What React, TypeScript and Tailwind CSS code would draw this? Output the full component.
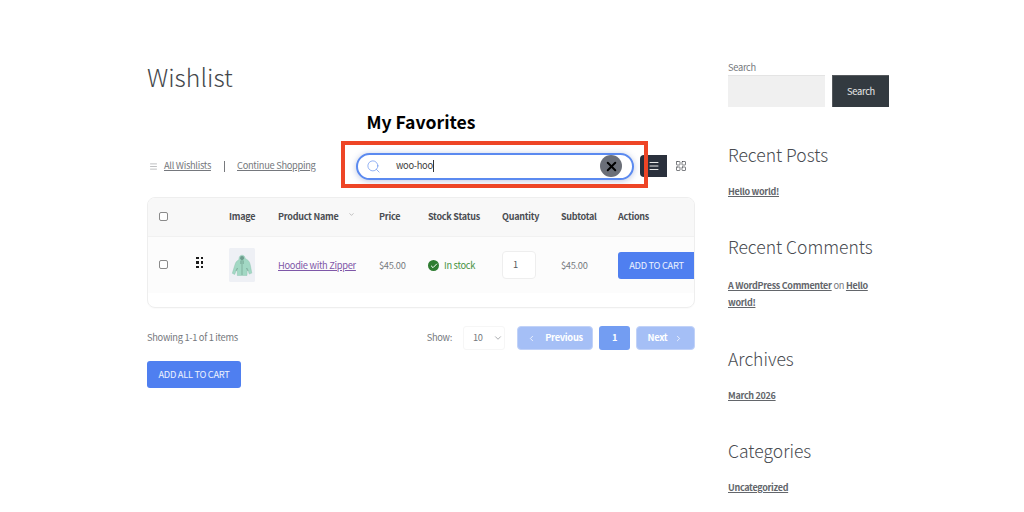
import React from "react";
import { Search, X, ChevronDown, ChevronLeft, ChevronRight, Menu, LayoutGrid, Check } from "lucide-react";

const font = { fontFamily: '"Noto Sans CJK SC", "Noto Sans", sans-serif' };

function Hoodie() {
  return (
    <svg viewBox="0 0 26 34" className="w-[26px] h-[34px]">
      <rect width="26" height="34" rx="1.5" fill="#eef0f5" />
      <path d="M10 10.500c.3-2.200 1.500-3.300 3-3.300 1.700 0 2.900 1.100 3.200 3.300l2.300 1.400c1.600 1 2.400 3 2.900 5.600l1.400 7.600-2.600 1-1.900-6-.3 7.400H8.300l-.2-7-2.400 6-2.400-1.200 2.400-7.800c.7-2.500 1.600-4.200 3-5l1.300-1z" fill="#a2d8c4" stroke="#86bda9" strokeWidth=".4" />
      <path d="M11 10.500c.6 1.200 1.300 1.700 2 1.700s1.500-.5 2.100-1.700l-.5-2c-1-.7-2.100-.7-3.100 0z" fill="#6d9c8d" />
      <path d="M13 12v15M11.800 12.500v3.500M14.300 12.500v3.500M8.500 20l-1.500 3M17.500 20l1.500 3" stroke="#5d8a7b" strokeWidth=".5" fill="none" />
    </svg>
  );
}

function Check0({ className = "" }: { className?: string }) {
  return <span className={"block w-[9px] h-[9px] rounded-[2px] border border-[#8a8a8a] bg-white " + className} />;
}

function SideHeading({ children }: { children: React.ReactNode }) {
  return <h2 className="text-[17.500px] leading-[26px] tracking-normal font-light text-[#484b50] whitespace-nowrap">{children}</h2>;
}

function SideLink({ children }: { children: React.ReactNode }) {
  return <a className="font-semibold underline text-[9px] tracking-[-0.3px] text-[#63666b]">{children}</a>;
}

function Cell({ children, className = "" }: { children: React.ReactNode; className?: string }) {
  return <div className={"flex items-center " + className}>{children}</div>;
}

export default function App() {
  return (
    <div style={font} className="relative w-[1024px] h-[512px] overflow-hidden bg-white text-[9.300px] tracking-[-0.3px] text-[#75787d]">
      <div className="flex w-[742px] ml-[147px] gap-[33px]">
        <main className="w-[548px] shrink-0">
          <h1 className="mt-[58px] h-[36px] text-[24.800px] leading-[36px] tracking-normal font-light text-[#44474b]">Wishlist</h1>
          <div className="mt-[15px] h-[26px] text-[17.600px] leading-[26px] tracking-normal font-bold text-black text-center">
            My Favorites
          </div>

          <div className="relative mt-[16px] h-[30px] flex items-center">
            <Menu size={9} className="text-[#8d8f93] ml-[2px]" strokeWidth={1.5} />
            <a className="ml-[6px] underline w-[48px] whitespace-nowrap">All Wishlists</a>
            <span className="ml-[12px] w-px h-[11px] bg-[#77797d]" />
            <a className="ml-[12px] w-[78px] whitespace-nowrap underline">Continue Shopping</a>
            <div className="ml-[41px] w-[278px] h-[27px] rounded-full border-2 border-[#5b8af0] shadow-[0_1px_6px_rgba(60,90,170,0.35)] bg-white flex items-center pl-[8px] pr-[10px]">
              <Search size={15} strokeWidth={1} className="text-[#5585ee]" />
              <span className="ml-[15px] text-[#3c3c3c] whitespace-nowrap">woo-hoo</span>
              <span className="w-px h-[12px] bg-[#333]" />
              <span className="ml-auto w-[22px] h-[22px] rounded-full bg-[#6b6f78] flex items-center justify-center">
                <X size={15} strokeWidth={3.2} className="text-black" />
              </span>
            </div>
            <span className="ml-[6px] w-[27px] h-[22px] rounded-l-[4px] bg-[#2a303c] flex items-center justify-center">
              <Menu size={12} strokeWidth={2} className="text-[#e8e8e8]" />
            </span>
            <LayoutGrid size={12} strokeWidth={1.4} className="ml-[8px] text-[#45474d]" />
            <div className="absolute left-[194px] top-[-10px] w-[307px] h-[47px] border-4 border-[#ee4526]" />
          </div>

          <div className="mt-[16px] h-[111px] rounded-[8px] border border-[#eeeeee] overflow-hidden shadow-[0_1px_1px_rgba(0,0,0,0.02)]">
            <div className="h-[39px] bg-[#f8f8f8] grid grid-cols-[81px_49px_101px_49px_74px_59px_57px_77px] text-[9px] tracking-[-0.25px] font-semibold text-[#4a4d52] border-b border-[#f1f1f1]">
              <Cell className="pl-[11px]"><Check0 className="mb-[1px]" /></Cell>
              <Cell>Image</Cell>
              <Cell>
                <span className="whitespace-nowrap">Product Name</span>
                <ChevronDown size={7} className="ml-[10px] mb-[5px] text-[#9a9a9a]" />
              </Cell>
              <Cell>Price</Cell>
              <Cell className="whitespace-nowrap">Stock Status</Cell>
              <Cell>Quantity</Cell>
              <Cell>Subtotal</Cell>
              <Cell>Actions</Cell>
            </div>
            <div className="h-[56px] bg-[#fcfcfc] grid grid-cols-[81px_49px_101px_49px_74px_59px_57px_77px]">
              <Cell className="pl-[11px]">
                <Check0 className="mb-[2px]" />
                <span className="ml-[28px] mb-[5px] grid grid-cols-2 gap-x-[2px] gap-y-[2px]">
                  {[0, 1, 2, 3, 4, 5].map((i) => (
                    <span key={i} className="block w-[2.500px] h-[2.500px] bg-[#1a1a1a]" />
                  ))}
                </span>
              </Cell>
              <Cell className="pb-[1px]"><Hoodie /></Cell>
              <Cell className="pt-[1px]"><a className="underline text-[#7e57a8] whitespace-nowrap">Hoodie with Zipper</a></Cell>
              <Cell className="pt-[1px]">$45.00</Cell>
              <Cell className="pt-[1px]">
                <span className="w-[11px] h-[11px] rounded-full bg-[#2f7d32] flex items-center justify-center">
                  <Check size={8} strokeWidth={3} className="text-white" />
                </span>
                <span className="ml-[5px] text-[#45913f] whitespace-nowrap">In stock</span>
              </Cell>
              <Cell>
                <span className="w-[34px] h-[28px] rounded-[4px] border border-[#eeeeee] bg-white flex items-center pl-[10px] text-[#55585c]">1</span>
              </Cell>
              <Cell className="pt-[1px]">$45.00</Cell>
              <Cell>
                <span className="w-[77px] h-[27px] pt-[1px] rounded-l-[3px] bg-[#4f7ff0] text-white/90 flex items-center justify-center whitespace-nowrap">ADD TO CART</span>
              </Cell>
            </div>
          </div>

          <div className="mt-[18px] h-[24px] flex items-center">
            <span>Showing 1-1 of 1 items</span>
            <span className="ml-auto">Show:</span>
            <span className="ml-[11px] w-[42px] h-[24px] rounded-[3px] border border-[#f6f6f6] flex items-center pl-[9px] pr-[1px] justify-between">
              10 <ChevronDown size={10} strokeWidth={1.5} />
            </span>
            <span className="ml-[12px] w-[76px] h-[24px] rounded-[4px] bg-[#a5bff6] border border-[#c1d2f8] text-white font-semibold flex items-center justify-center gap-[9px]">
              <ChevronLeft size={9} /> Previous
            </span>
            <span className="ml-[6px] w-[31px] h-[24px] rounded-[3px] bg-[#739df2] text-white font-semibold flex items-center justify-center">1</span>
            <span className="ml-[6px] w-[59px] h-[24px] rounded-[4px] bg-[#a5bff6] border border-[#c1d2f8] text-white font-semibold flex items-center justify-center gap-[7px]">
              Next <ChevronRight size={9} />
            </span>
          </div>

          <span className="mt-[11px] w-[94px] h-[27px] pt-[1px] rounded-[3px] bg-[#4f7ff0] text-white/90 flex items-center justify-center whitespace-nowrap">ADD ALL TO CART</span>
        </main>

        <aside className="w-[161px] shrink-0 pt-[60px]">
          <div className="h-[15px] leading-[14px]">Search</div>
          <div className="flex gap-[7px]">
            <div className="w-[97px] h-[32px] bg-[#f0f0f0] border-t border-[#e4e4e4]" />
            <div className="w-[57px] h-[32px] bg-[#333a40] text-white/90 flex items-center justify-center border-l border-t border-[#55595d]">Search</div>
          </div>
          <div className="mt-[35px]"><SideHeading>Recent Posts</SideHeading></div>
          <p className="mt-[15px] leading-[17px]"><SideLink>Hello world!</SideLink></p>
          <div className="mt-[34px]"><SideHeading>Recent Comments</SideHeading></div>
          <p className="mt-[17px] leading-[17px]">
            <SideLink>A WordPress Commenter</SideLink> on <SideLink>Hello world!</SideLink>
          </p>
          <div className="mt-[35px]"><SideHeading>Archives</SideHeading></div>
          <p className="mt-[15px] leading-[17px]"><SideLink>March 2026</SideLink></p>
          <div className="mt-[34px]"><SideHeading>Categories</SideHeading></div>
          <p className="mt-[15px] leading-[17px]"><SideLink>Uncategorized</SideLink></p>
        </aside>
      </div>
    </div>
  );
}
